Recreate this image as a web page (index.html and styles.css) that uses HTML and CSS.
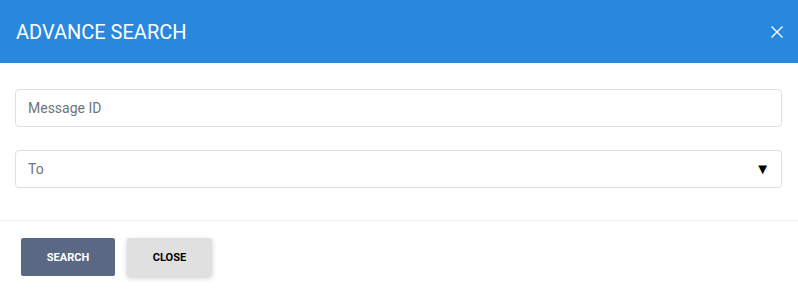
FILE: index.html
```html
<!DOCTYPE html>
<html lang="en">
<head>
    <meta charset="UTF-8">
    <meta name="viewport" content="width=device-width, initial-scale=1.0">
    <title>Advance Search</title>
    <link rel="stylesheet" href="styles.css">
</head>
<body>
    <div class="modal">
        <!-- Modal header -->
        <header class="modal-header">
            <h1 class="modal-title">ADVANCE SEARCH</h1>
            <button class="close-icon" type="button" aria-label="Close">
                <svg width="12" height="12" viewBox="0 0 12 12">
                    <path d="M0.5 0.5 L11.5 11.5 M11.5 0.5 L0.5 11.5" stroke="#fff" stroke-width="1.3" fill="none"/>
                </svg>
            </button>
        </header>

        <!-- Search fields -->
        <form class="modal-body" id="searchForm">
            <input type="text" class="field" placeholder="Message ID">
            <div class="select-wrap">
                <select class="field select">
                    <option>To</option>
                </select>
                <span class="caret">&#9660;</span>
            </div>
        </form>

        <!-- Footer buttons -->
        <div class="modal-footer">
            <button type="submit" form="searchForm" class="btn btn-search">SEARCH</button>
            <button type="button" class="btn btn-close">CLOSE</button>
        </div>
    </div>
</body>
</html>
```

FILE: styles.css
```css
/* Reset default browser styles */
* {
    margin: 0;
    padding: 0;
    box-sizing: border-box;
}

body {
    background-color: #fff;
    font-family: Roboto, "Liberation Sans", sans-serif;
}

/* Header styles */
.modal-header {
    background-color: #2988de;
    color: #fff;
    height: 63px;
    padding: 0 15px 0 16px;
    display: flex;
    justify-content: space-between;
    align-items: center;
}

.modal-title {
    font-size: 20px;
    font-weight: 400;
}

.close-icon {
    background: none;
    border: none;
    width: 12px;
    height: 12px;
    display: flex;
    cursor: pointer;
}

/* Body with fields */
.modal-body {
    padding: 26px 16px 32px 15px;
    display: flex;
    flex-direction: column;
    gap: 23px;
    border-bottom: 1px solid #f0f0f0;
}

.field {
    width: 100%;
    height: 38px;
    border: 1px solid #dcdfe4;
    border-radius: 4px;
    padding: 0 12px;
    font-family: Roboto, "Liberation Sans", sans-serif;
    font-size: 14px;
    color: #6c757d;
    background-color: #fff;
    outline: none;
}

.field::placeholder {
    color: #6c757d;
}

.select-wrap {
    position: relative;
}

.select {
    appearance: none;
    -webkit-appearance: none;
}

.caret {
    position: absolute;
    right: 12px;
    top: 10px;
    font-size: 15px;
    color: #000;
    pointer-events: none;
}

/* Footer buttons */
.modal-footer {
    padding: 17px 21px 16px;
    display: flex;
    gap: 12px;
}

.btn {
    height: 38px;
    border: none;
    border-radius: 2px;
    font-family: Roboto, "Liberation Sans", sans-serif;
    font-size: 11px;
    font-weight: 700;
    cursor: pointer;
}

.btn-search {
    width: 94px;
    background-color: #5a6884;
    color: #fff;
}

.btn-close {
    width: 85px;
    background-color: #e0e0e0;
    color: #000;
    box-shadow: 0 2px 5px rgba(0, 0, 0, 0.2);
}
```
